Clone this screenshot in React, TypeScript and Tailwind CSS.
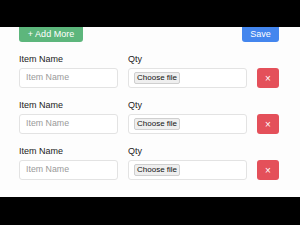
import React from 'react'

function ItemRow() {
  return (
    <div className="flex flex-col">
      <div className="flex h-[12px] items-center text-[9px] font-medium leading-none text-[#222]">
        <span className="w-[109px]">Item Name</span>
        <span>Qty</span>
      </div>
      <div className="mt-[3px] flex h-[20px] items-stretch">
        <div className="flex w-[99px] items-center rounded-[3px] border border-[#e3e3e3] bg-white pl-[6px] text-[8.8px] text-[#9a9a9a]">
          Item Name
        </div>
        <div className="ml-[10px] flex w-[119px] items-center rounded-[3px] border border-[#e3e3e3] bg-white pl-[5px]">
          <span className="rounded-[2px] border border-[#cfcfcf] bg-[#efefef] px-[2px] text-[8px] leading-[10px] text-[#111]">
            Choose file
          </span>
        </div>
        <div className="ml-[10px] flex w-[22px] items-center justify-center rounded-[3px] bg-[#e4505a] text-[10px] text-white">
          ×
        </div>
      </div>
    </div>
  )
}

export default function App() {
  return (
    <div
      className="flex h-[225px] w-[300px] flex-col overflow-hidden bg-black"
      style={{ fontFamily: '"Liberation Sans", Arial, sans-serif' }}
    >
      <div className="h-[27px] shrink-0" />
      <div className="flex h-[170px] shrink-0 flex-col bg-[#fdfdfd] pl-[19px] pr-[21px]">
        <div className="flex h-[15px] items-stretch justify-between">
          <div className="flex w-[64px] items-center justify-center rounded-b-[3px] bg-[#5db67c] text-[9px] font-medium text-white">
            + Add More
          </div>
          <div className="flex w-[37px] items-center justify-center rounded-b-[3px] bg-[#4486ee] text-[9px] font-medium text-white">
            Save
          </div>
        </div>
        <div className="mt-[11px] flex flex-col gap-[11px]">
          <ItemRow />
          <ItemRow />
          <ItemRow />
        </div>
      </div>
    </div>
  )
}
